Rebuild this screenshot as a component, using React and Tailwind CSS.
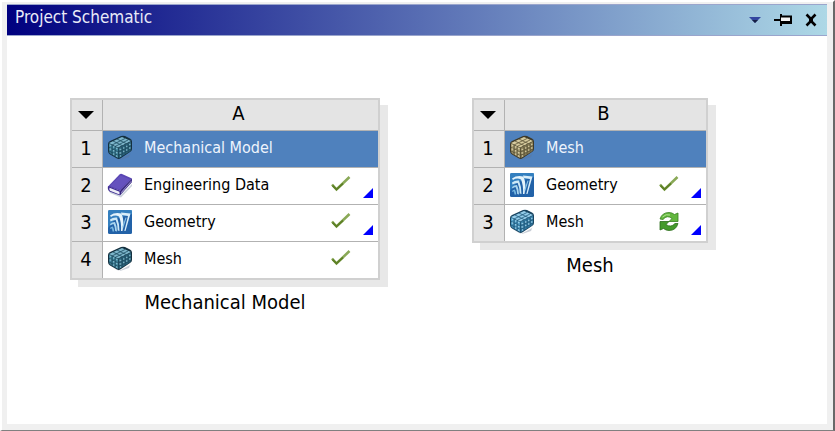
const meshTones = {
  dark: { top: "#7db6cb", left: "#3c8098", right: "#2a627a", line: "#1c4a5e", edge: "#14303f", light: "#93c8da" },
  blue: { top: "#94cdea", left: "#4796bf", right: "#327aa2", line: "#1f587a", edge: "#194460", light: "#b0dff4" },
  tan: { top: "#d6cb9e", left: "#a59a70", right: "#857b56", line: "#5a5236", edge: "#3f3a28", light: "#e4dab0" },
};

function MeshIcon({ tone }) {
  const c = meshTones[tone];
  return (
    <svg className="block size-[26px]" viewBox="0 0 26 26" fill="none" aria-hidden="true">
      <path d="M5 21l7 4 11-6 2-5-3 8-9 3z" fill="#64748b" opacity=".35" />
      <path d="M1 9q0-2 2-3l11-5q2-.7 4 0l5 2.500q2 1 2 3V14q0 2-2 3l-9 6q-2 1.500-4 .5l-7-4Q1 18.500 1 16z" fill={c.edge} />
      <path d="M2 8L15 2l9 4-13 6.500z" fill={c.top} />
      <path d="M2 8.500l9 4.500v10l-7-4q-2-1-2-3z" fill={c.left} />
      <path d="M11 13l13-6.500V14q0 2-2 3l-10 6z" fill={c.right} />
      <path d="M6 6l9 4.500M10 4l9 4.500M5 10l13-6.500M8 11.500L21 5" stroke={c.line} strokeWidth=".8" />
      <path d="M2 12.500l9 4.500 13-6.500M2 16l9 4.500 13-6.500M5 10v10M8 11.500v10M11.500 13v10M15 11.500V21M18 10v9M21 8.500V17" stroke={c.line} strokeWidth=".9" />
      <path d="M2.800 10.500h1.500M6 12h1.500M9 13.500h1.500M2.800 14h1.500M6 15.700h1.500M9 17.500h1.500M6 19h1.500M9 21h1.500M12.500 14.500h1.800M16 13h1.500M19 11.500h1.500M22 9.500h1.500M12.500 18h1.800M16 16.500h1.500M19 15h1.500M22 13h1.500M13 21h1.200" stroke={c.light} strokeWidth="1.400" opacity=".75" />
    </svg>
  );
}

function BookIcon() {
  return (
    <svg className="block size-[26px]" viewBox="0 0 26 26" fill="none" aria-hidden="true">
      <path d="M2 18l11 6 12-12v2L14 25.500 3 21z" fill="#94a3b8" opacity=".5" />
      <path d="M1 14.500L12.500 2.500Q13.500 1.500 15 2L25 6.500 13 18.500z" fill="#5a46b4" />
      <path d="M3 14L13.500 3.500 23 7.300 12.500 17.500z" fill="#6552be" />
      <path d="M1 14l12 4.500v5L2.500 19.500Q.2 17.500 1 14z" fill="#3e2c92" />
      <path d="M2.500 15.700l10 4.100v2.700L3 18.800q-1-1-.5-3.100z" fill="#eeeef6" />
      <path d="M13 18.500L25 6.500V10L13 23.500z" fill="#34237e" />
      <path d="M14 20.300L24.500 8.500v1L14 21.500z" fill="#a9a2d6" />
    </svg>
  );
}

function GeometryIcon() {
  return (
    <svg className="block size-[26px]" viewBox="0 0 26 26" fill="none" aria-hidden="true">
      <rect x="1" y="1" width="24" height="24" rx="1.500" fill="#2262a8" />
      <path d="M1 2.500Q1 1 2.500 1H25v4L8 10 1 19z" fill="#3b8cc9" opacity=".7" />
      <path d="M3 6.500Q8 3 14 4.500l1 1.500q2.500 6 .5 16h-1.500q.5-9-2-14.500Q8 5.500 4 8z" fill="#e4f3fb" />
      <path d="M14 3.500l9.500 1-5 17.500h-1.200L21 7l-6.500-1z" fill="#d8edf9" />
      <path d="M18.500 8.500l1 .3-3.500 11-.7-2z" fill="#8cc5e8" />
      <path d="M3 10.500Q6 8 10 8.500q2.500 6 2.500 13.500l-1.800-.5q0-6-2-10.500-2.700 0-5.200 1.500z" fill="#cde9f7" />
      <path d="M3 15q2-2 5-2 2 4 2 9.500l-1.800-.5q0-4-1.700-7-1.500 0-3 1.500z" fill="#a9d6ef" />
      <path d="M3 19q1.200-1.500 2.800-1.500 1.200 2 1.400 5H5.500q0-2-1-3.300-.8 0-1.500.8z" fill="#75b5df" />
    </svg>
  );
}

function CheckIcon() {
  return (
    <svg className="block size-[22px]" viewBox="0 0 22 22" fill="none" role="img" aria-label="Up to date">
      <path d="M2 10.500l4.500 5L19.500 3" stroke="#8aa957" strokeWidth="2.600" />
      <path d="M2.500 11.500l4 4L13 9.500" stroke="#5d8026" strokeWidth="1.800" />
    </svg>
  );
}

function RefreshIcon() {
  return (
    <svg className="block size-[22px]" viewBox="0 0 22 22" role="img" aria-label="Refresh required">
      <path d="M2 8Q4 1.500 11 1.500q3 0 5.500 2L20 2v8.500h-9l3-3q-5-4-9 1z" fill="#62b63e" stroke="#37821f" strokeWidth=".8" />
      <path d="M20 12.500q-2 7-9 7-3 0-5.500-2L2 19v-8.500h9l-3 3q5 3.500 9-1z" fill="#449a2b" stroke="#2b6d1b" strokeWidth=".8" />
      <path d="M4.500 6Q8 2.500 12 4" stroke="#b0e68e" strokeWidth="1" fill="none" />
    </svg>
  );
}

const systems = [
  {
    column: "A",
    name: "Mechanical Model",
    width: "w-[310px]",
    cells: [
      { label: "Mechanical Model", icon: <MeshIcon tone="dark" /> },
      { label: "Engineering Data", icon: <BookIcon />, status: <CheckIcon />, linked: true },
      { label: "Geometry", icon: <GeometryIcon />, status: <CheckIcon />, linked: true },
      { label: "Mesh", icon: <MeshIcon tone="dark" />, status: <CheckIcon /> },
    ],
  },
  {
    column: "B",
    name: "Mesh",
    width: "w-[236px]",
    cells: [
      { label: "Mesh", icon: <MeshIcon tone="tan" /> },
      { label: "Geometry", icon: <GeometryIcon />, status: <CheckIcon />, linked: true },
      { label: "Mesh", icon: <MeshIcon tone="blue" />, status: <RefreshIcon />, linked: true },
    ],
  },
];

function SystemBlock({ system }) {
  return (
    <figure className={`shrink-0 ${system.width}`}>
      <table className="w-full table-fixed border-separate border-spacing-0 border-2 border-[#d0d0d0] bg-white shadow-[8px_7px_0_#e8e8e8]">
        <thead>
          <tr className="h-[30px] bg-[#e4e4e4]">
            <th className="w-[30px] p-0">
              <button aria-label={`${system.name} menu`} className="flex h-[30px] w-full items-center justify-center pr-0.5">
                <svg className="h-2 w-4" viewBox="0 0 16 8" aria-hidden="true">
                  <path d="M0 0h16L8 8z" />
                </svg>
              </button>
            </th>
            <th className="border-l border-[#b2b2b2] p-0 pr-1 pb-1 text-xl leading-6 font-normal">{system.column}</th>
          </tr>
        </thead>
        <tbody>
          {system.cells.map((cell, i) => (
            <tr key={i} className="h-[37px]">
              <th className="border-t border-[#b2b2b2] bg-[#e4e4e4] p-0 pr-0.5 pb-0.5 text-xl leading-6 font-normal">{i + 1}</th>
              <td className={`border-t border-l border-[#b2b2b2] p-0 ${i === 0 ? "bg-[#4f81bd] text-[#eef4fc]" : ""}`}>
                <div className="flex h-9 items-center gap-[11px] pr-[5px] pb-0.5 pl-1">
                  {cell.icon}
                  <span className="flex-1 text-base leading-6 whitespace-nowrap">{cell.label}</span>
                  {cell.status}
                  <span className="size-[10px] self-end">
                    {cell.linked && (
                      <svg className="-mt-1 size-[10px]" viewBox="0 0 10 10" aria-hidden="true">
                        <path d="M10 0v10H0z" fill="#0000ff" />
                      </svg>
                    )}
                  </span>
                </div>
              </td>
            </tr>
          ))}
        </tbody>
      </table>
      <figcaption className="mt-2 text-center text-xl leading-7">{system.name}</figcaption>
    </figure>
  );
}

function TitleBar() {
  return (
    <header className="flex h-8 items-center justify-between border-y border-[#9aa5cc] bg-linear-to-r/srgb from-[#00007f] to-[#add8e6] px-2">
      <h1 className="pb-1.5 text-[17px] leading-6 text-[#e8eaf8]">Project Schematic</h1>
      <div className="flex items-center gap-3">
        <button aria-label="Window menu">
          <svg className="h-2 w-3" viewBox="0 0 12 8" aria-hidden="true">
            <path d="M0 1h12L6 7z" fill="#3346a0" />
            <path d="M3 4h6L6 7z" fill="#172044" />
          </svg>
        </button>
        <button aria-label="Pin">
          <svg className="h-3.5 w-5" viewBox="0 0 20 14" fill="none" stroke="#000" strokeWidth="2" aria-hidden="true">
            <path d="M1 7h6M8 1v12" />
            <path d="M8 3.500h10v6H8" fill="#f4f4f4" />
            <path d="M8 9.500h11" strokeWidth="3" />
          </svg>
        </button>
        <button aria-label="Close">
          <svg className="h-3.5 w-3.5" viewBox="0 0 14 14" fill="none" stroke="#000" strokeWidth="2.600" aria-hidden="true">
            <path d="M1.500 1.500l4 4v3l-4 4M10.500 1.500l-4 4v3l4 4M4 7h4" />
          </svg>
        </button>
      </div>
    </header>
  );
}

export default function App() {
  return (
    <div className="flex min-h-screen flex-col border-t-2 border-r-2 border-b border-l-2 border-t-white border-r-[#696969] border-b-[#808080] border-l-white bg-[#f0f0f0] pt-0.5 pr-1.5 pb-1.5 pl-[5px] font-['DejaVu_Sans_Condensed','DejaVu_Sans',sans-serif] text-black">
      <TitleBar />
      <main className="flex flex-1 items-start gap-[92px] overflow-hidden bg-white pt-[62px] pl-[63px]">
        {systems.map((system) => (
          <SystemBlock key={system.column} system={system} />
        ))}
      </main>
    </div>
  );
}
